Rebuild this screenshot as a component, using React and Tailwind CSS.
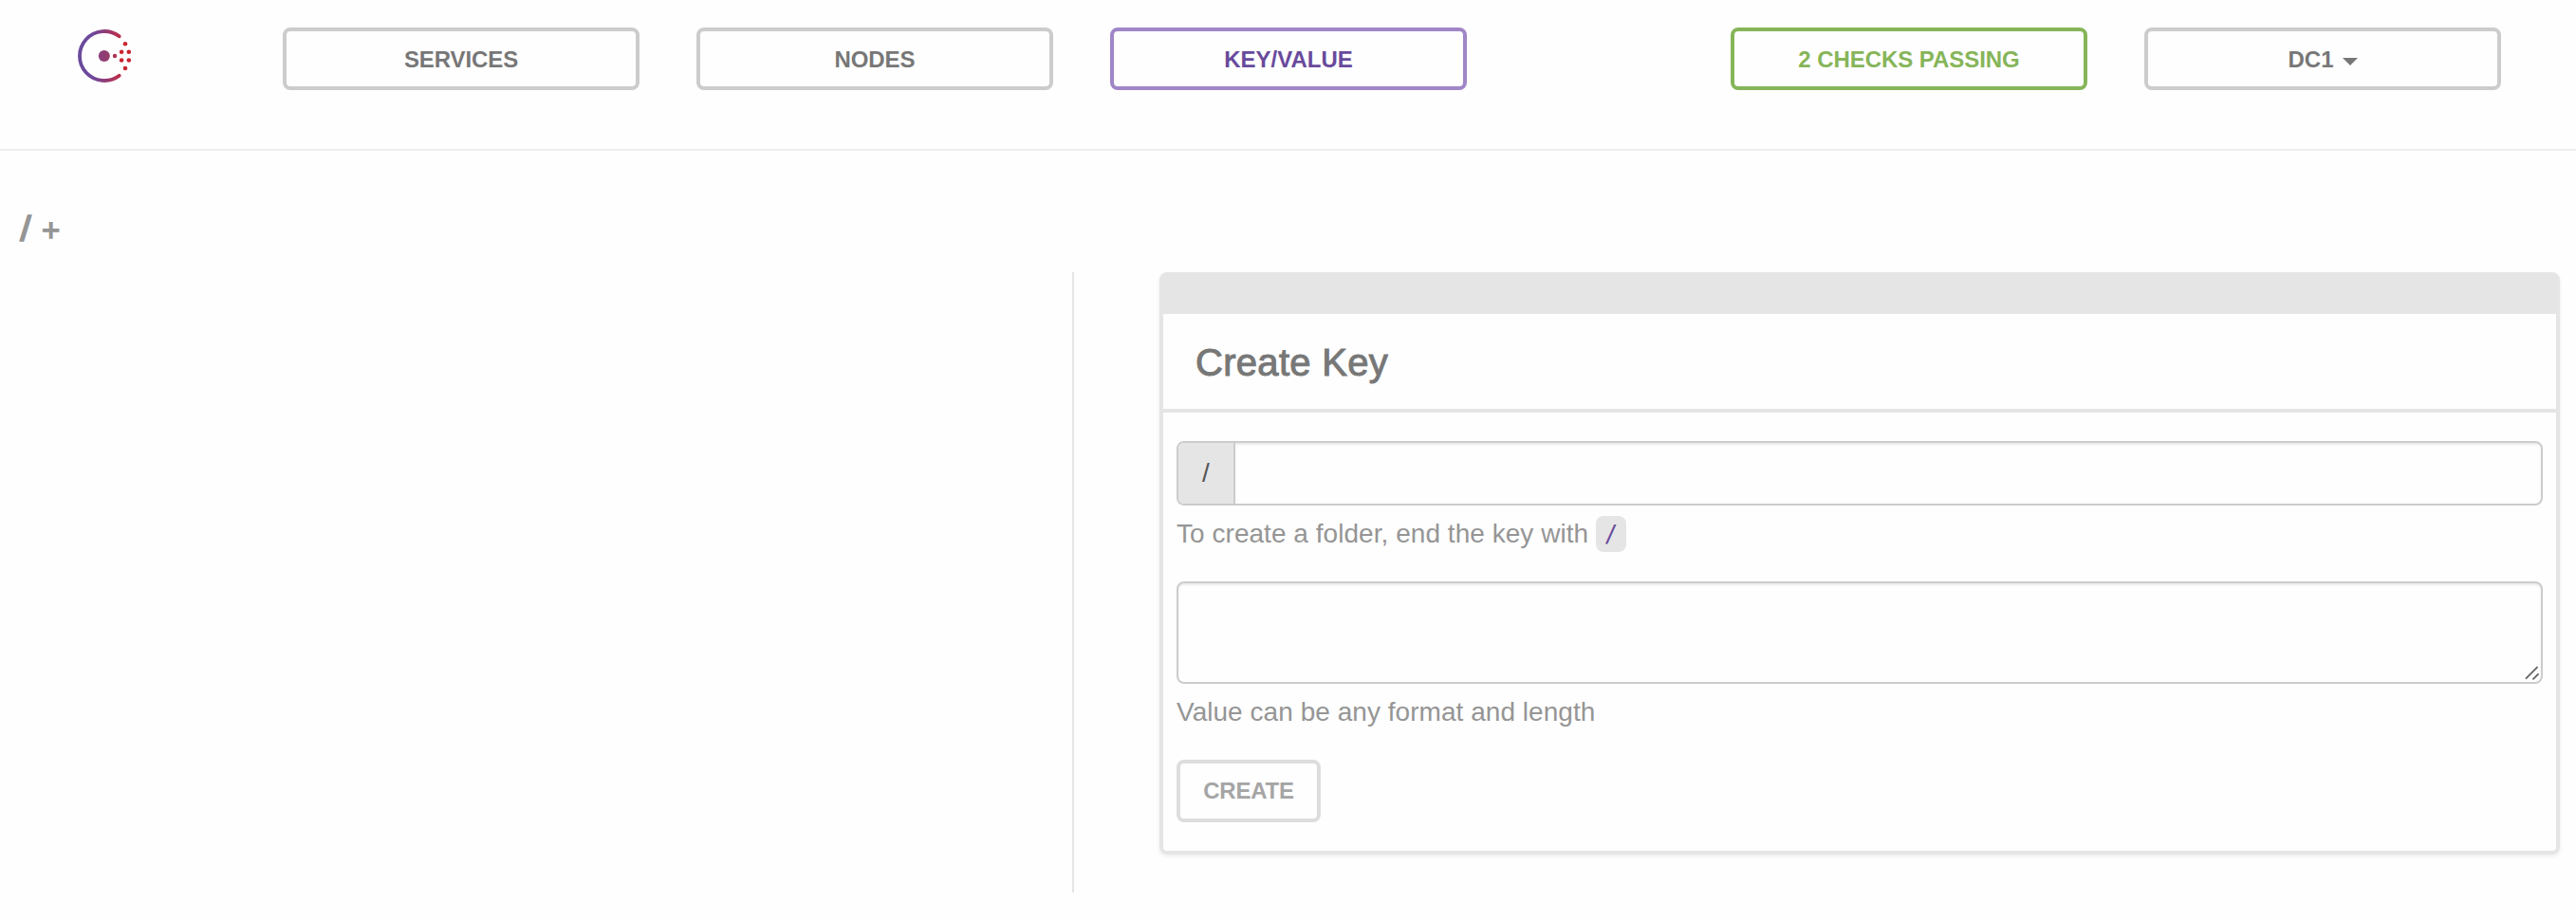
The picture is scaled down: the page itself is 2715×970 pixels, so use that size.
const navBase =
  "flex h-[66px] w-[376px] items-center justify-center rounded-[8px] border-4 pt-[2px] text-[24px] font-bold leading-none";

function Logo() {
  return (
    <svg width="60" height="60" viewBox="0 0 60 60" aria-hidden="true">
      <defs>
        <linearGradient id="ring" gradientUnits="userSpaceOnUse" x1="2" y1="30" x2="50" y2="30">
          <stop offset="0" stopColor="#694a9c" />
          <stop offset="0.35" stopColor="#6f479a" />
          <stop offset="1" stopColor="#c62a3f" />
        </linearGradient>
        <linearGradient id="core" gradientUnits="userSpaceOnUse" x1="23" y1="30" x2="36" y2="30">
          <stop offset="0" stopColor="#84407f" />
          <stop offset="1" stopColor="#9a3a68" />
        </linearGradient>
      </defs>
      <path d="M45.7 9.3A26 26 0 1 0 45.7 50.7" fill="none" stroke="url(#ring)" strokeWidth="3.8" strokeLinecap="round" />
      <circle cx="29.8" cy="30" r="6" fill="url(#core)" />
      <circle cx="41" cy="30" r="2.2" fill="#b22f4f" />
      <g fill="#c9252f">
        <circle cx="48.1" cy="25.7" r="2.3" />
        <circle cx="55.8" cy="25.7" r="2.3" />
        <circle cx="48.1" cy="34.5" r="2.3" />
        <circle cx="55.8" cy="34.5" r="2.3" />
        <circle cx="52" cy="17.2" r="2.3" />
        <circle cx="52" cy="43" r="2.3" />
      </g>
    </svg>
  );
}

export default function App() {
  return (
    <div className="flex h-[970px] w-[2715px] flex-col overflow-hidden bg-[#fefefe] font-['Liberation_Sans',Arial,sans-serif]">
      <header className="flex h-[159px] shrink-0 items-start border-b-2 border-[#eeeeee] pt-[29px] pl-[80px]">
        <div className="h-[60px] w-[218px]">
          <Logo />
        </div>
        <nav className="flex gap-[60px]">
          <a className={`${navBase} border-[#cccccc] text-[#777777]`}><span className="tracking-[-0.1px]">SERVICES</span></a>
          <a className={`${navBase} border-[#cccccc] text-[#777777]`}><span className="tracking-[-0.1px]">NODES</span></a>
          <a className={`${navBase} border-[#a086c7] text-[#694a9c]`}><span>KEY/VALUE</span></a>
        </nav>
        <div className="ml-[278px] flex gap-[60px]">
          <a className={`${navBase} border-[#86b559] text-[#86b559]`}><span className="tracking-[-0.05px]">2 CHECKS PASSING</span></a>
          <a className={`${navBase} border-[#cccccc] text-[#777777]`}>
            <span>DC1</span>
            <i className="mt-[4px] ml-[9px] border-x-8 border-t-8 border-x-transparent border-t-[#777777]" />
          </a>
        </div>
      </header>

      <h4 className="flex h-[128px] shrink-0 items-start pt-[61px] pl-[20px] text-[36px] leading-[44px] text-[#959595] [-webkit-text-stroke:1.4px_#959595]">
        <span className="w-[24px] origin-left scale-x-115 pl-[1px]">/</span>
        <span className="pt-px text-[33px]">+</span>
      </h4>

      <main className="flex h-[654px]">
        <aside className="w-[1132px] border-r-2 border-[#e5e5e5]" />
        <section className="ml-[90px] h-[614px] w-[1476px] rounded-[8px] border-4 border-[#e5e5e5] shadow-[0_2px_4px_rgba(0,0,0,0.07)]">
          <div className="h-[40px] bg-[#e5e5e5]" />
          <div className="flex h-[104px] items-center border-b-4 border-[#e5e5e5] pt-[2px] pl-[34px] text-[40px] tracking-[0.3px] text-[#777777] [-webkit-text-stroke:1px_#777777]">
            <span>Create Key</span>
          </div>
          <div className="px-[14px] pt-[30px]">
            <div className="flex h-[68px] overflow-hidden rounded-[8px] border-2 border-[#cccccc]">
              <span className="flex w-[60px] items-center justify-center border-r-2 border-[#cccccc] bg-[#e5e5e5] text-[28px] text-[#555555]">/</span>
              <div className="flex-1 shadow-[inset_0_2px_2px_rgba(0,0,0,0.075)]" />
            </div>
            <p className="mt-[10px] flex h-[40px] items-center text-[28px] tracking-[0.04px] text-[#959595]">
              <span className="w-[442px] whitespace-nowrap">To create a folder, end the key with</span>
              <code className="flex h-[38px] w-[32px] items-center justify-center rounded-[8px] bg-[#e5e5e5] font-['DejaVu_Sans_Mono',monospace] text-[24px] leading-none text-[#694a9c]">/</code>
            </p>
            <div className="mt-[30px] flex h-[108px] items-end justify-end rounded-[8px] border-2 border-[#cccccc] pr-[2px] pb-[2px] shadow-[inset_0_2px_2px_rgba(0,0,0,0.075)]">
              <svg width="15" height="15" viewBox="0 0 15 15" aria-hidden="true">
                <path d="M1.5 13.2L13 1.6M9 13.8L14 8.8" stroke="#666666" strokeWidth="1.9" strokeLinecap="round" />
              </svg>
            </div>
            <p className="mt-[10px] flex h-[40px] items-center text-[28px] tracking-[0.04px] text-[#959595]">
              <span>Value can be any format and length</span>
            </p>
            <button className="mt-[30px] flex h-[66px] w-[152px] items-center justify-center rounded-[8px] border-4 border-[#dddddd] text-[24px] font-bold leading-none tracking-[-0.2px] text-[#a5a5a5]">
              <span>CREATE</span>
            </button>
          </div>
        </section>
      </main>
    </div>
  );
}
